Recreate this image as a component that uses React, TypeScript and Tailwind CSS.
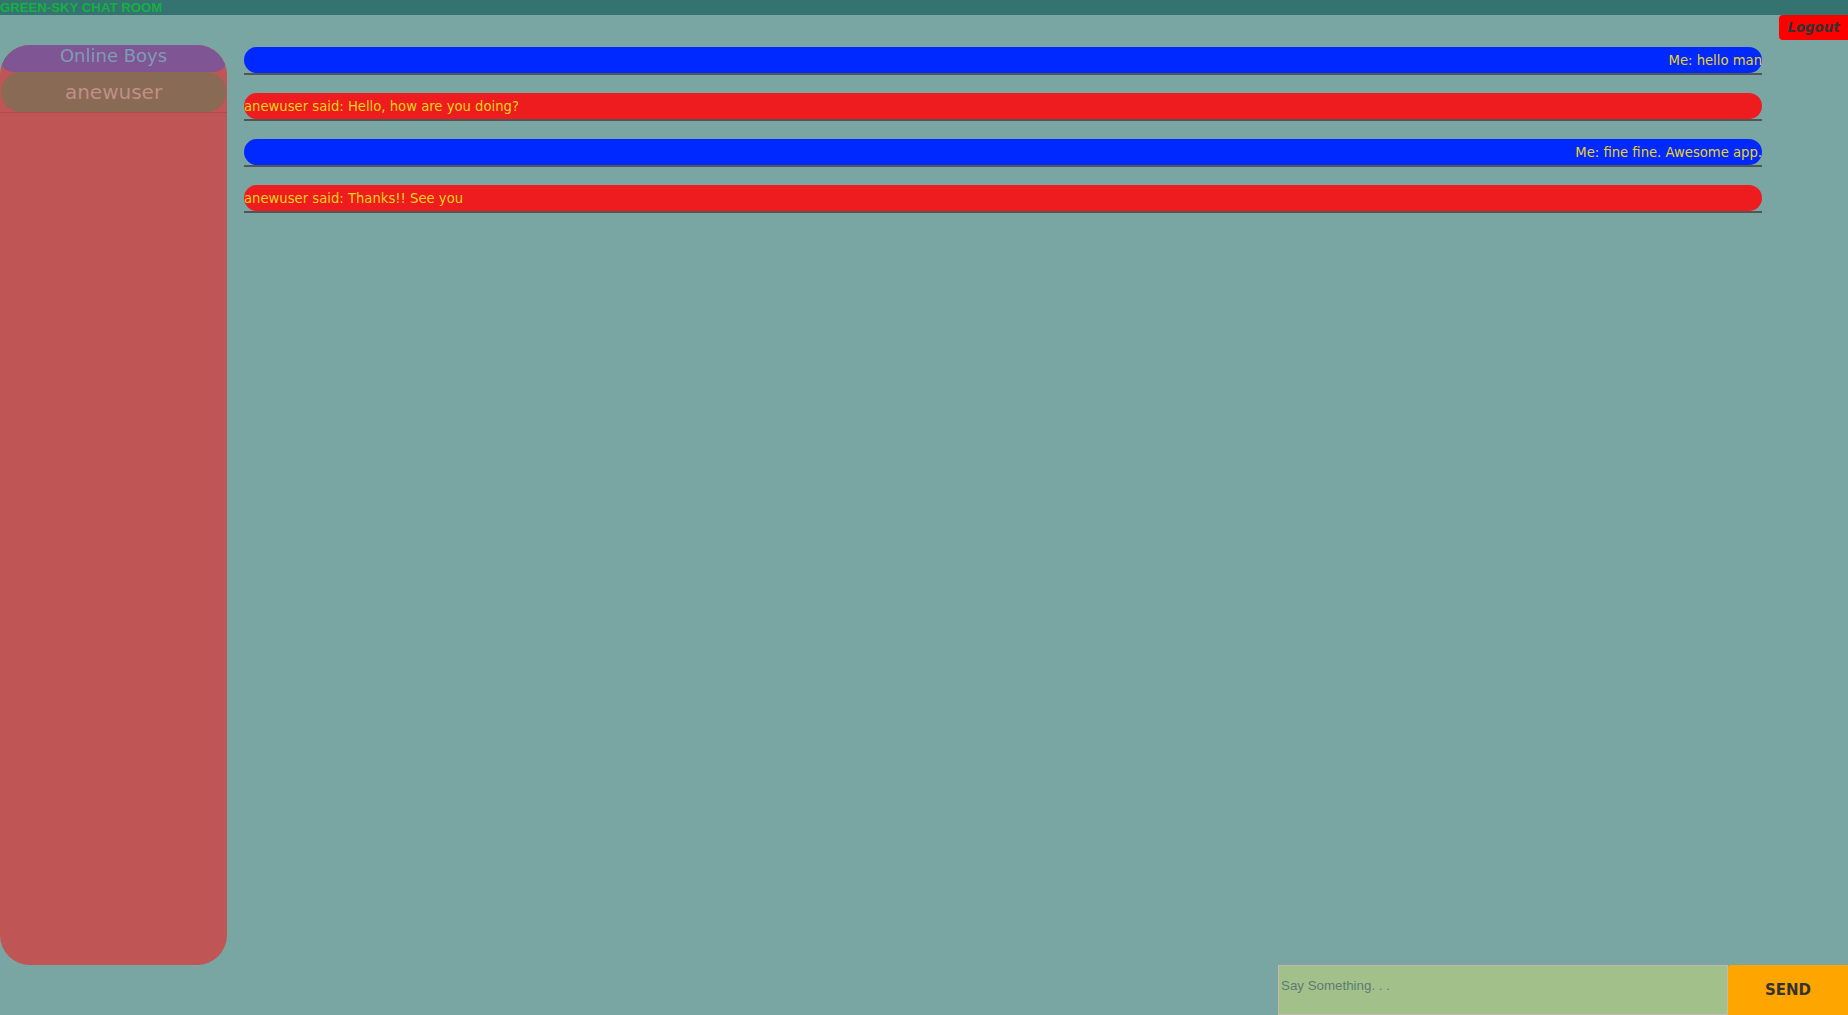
import React from 'react';

const messages = [
    { mine: true, text: 'Me: hello man' },
    { mine: false, text: 'anewuser said: Hello, how are you doing?' },
    { mine: true, text: 'Me: fine fine. Awesome app.' },
    { mine: false, text: 'anewuser said: Thanks!! See you' },
];

const onlineUsers = ['anewuser'];

export default function App() {
    return (
        <div className="h-screen flex flex-col bg-[#79a6a3] overflow-hidden font-['DejaVu_Sans',sans-serif]">
            {/* Header */}
            <div className="h-[15px] shrink-0 bg-[#347370]">
                <h1 className="text-[13.2px] leading-[15px] font-bold text-[#14b043] font-['Liberation_Sans',Arial,sans-serif]">
                    GREEN-SKY CHAT ROOM
                </h1>
            </div>

            <div className="h-[25px] shrink-0 flex justify-end">
                <button className="w-[69px] h-[25px] rounded-l-[4px] bg-[#ff0000] text-[#333] text-[13.333px] font-bold italic leading-[25px] text-center">
                    Logout
                </button>
            </div>

            <div className="flex-1 flex min-h-0">
                {/* Sidebar */}
                <div className="w-[227px] shrink-0 mt-[5px] rounded-[30px] bg-[#bf5555] overflow-hidden">
                    <div className="h-[27px] rounded-[14px] bg-[#805593] text-[#7d9cb6] text-[18px] leading-[22px] text-center">
                        Online Boys
                    </div>
                    <div className="border-b border-[#a94c4c]">
                        {onlineUsers.map(u => (
                            <div key={u} className="h-[40px] mx-[1px] rounded-[20px] bg-[#886a55] text-[#c08f88] text-[20px] leading-[40px] text-center">
                                {u}
                            </div>
                        ))}
                    </div>
                </div>

                {/* Messages */}
                <div className="flex-1 ml-[17px] mr-[86px] pt-[7px] flex flex-col gap-[18px]">
                    {messages.map((m, i) => (
                        <div key={i} className="border-b-2 border-[#555]">
                            <div className={`h-[26px] rounded-full text-[13.2px] leading-[28px] text-[#ebd41a] whitespace-nowrap ${m.mine ? 'bg-[#0029ff] text-right' : 'bg-[#ee1c1e] text-left'}`}>
                                {m.text}
                            </div>
                        </div>
                    ))}
                </div>
            </div>

            {/* Input bar */}
            <div className="h-[50px] shrink-0 flex justify-end">
                <input
                    placeholder="Say Something. . ."
                    className="w-[450px] h-[50px] border border-[#c2b9b1] bg-[#a2c18a] pl-[2px] pb-[10px] text-[13.333px] font-['Liberation_Sans',Arial,sans-serif] text-[#333] placeholder:text-[#5c7b74] outline-none"
                />
                <button className="w-[120px] h-[50px] rounded-tl-[3px] bg-[#ffa500] text-[#333] text-[15px] font-bold flex items-center justify-center">
                    SEND
                </button>
            </div>
        </div>
    );
}
